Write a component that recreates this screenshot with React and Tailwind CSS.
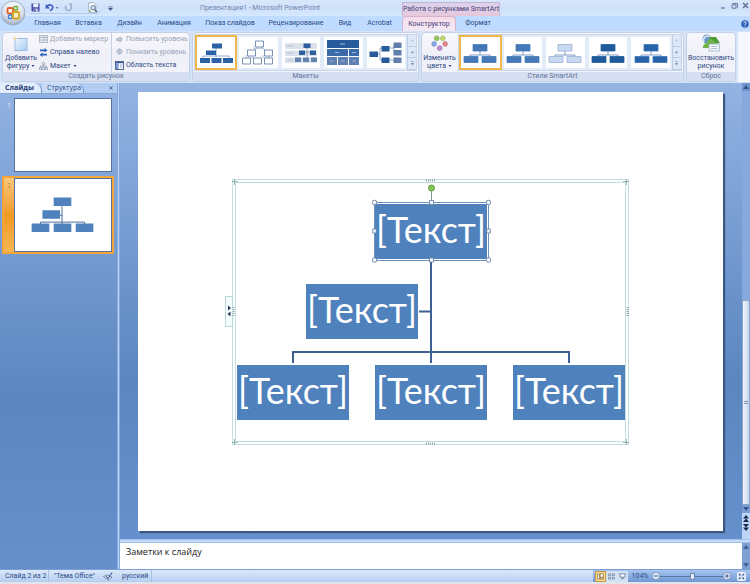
import React from "react";

const menuTabs = [
  { label: "Главная", width: "w-[41px]" },
  { label: "Вставка", width: "w-[41px]" },
  { label: "Дизайн", width: "w-[41px]" },
  { label: "Анимация", width: "w-[48px]" },
  { label: "Показ слайдов", width: "w-[64px]" },
  { label: "Рецензирование", width: "w-[68px]" },
  { label: "Вид", width: "w-[30px]" },
  { label: "Acrobat", width: "w-[39px]" },
];

const styleVariants = [
  { id: "flat", fill: "#4478b8", stroke: "#4478b8", selected: true },
  { id: "outline", fill: "#4478b8", stroke: "#4478b8" },
  { id: "subtle", fill: "#c9d9f1", stroke: "#9db1d6" },
  { id: "moderate", fill: "#215a9c", stroke: "#215a9c" },
  { id: "intense", fill: "#2763a8", stroke: "#3b76b8" },
];

const childNodes = ["left-[5px]", "left-[143px]", "left-[281px]"];

function OfficeOrb() {
  return (
    <svg viewBox="0 0 26 26" className="h-[26px] w-[26px]" aria-hidden="true">
      <defs>
        <radialGradient id="orb" cx="50%" cy="30%" r="70%">
          <stop offset="0" stopColor="#ffffff" />
          <stop offset="0.6" stopColor="#dce2ec" />
          <stop offset="1" stopColor="#9dabc3" />
        </radialGradient>
      </defs>
      <circle cx="13" cy="13" r="12" fill="url(#orb)" stroke="#9aa8c2" strokeWidth="0.8" />
      <rect x="7.5" y="8" width="5.5" height="5.5" rx="1" fill="#fff4e8" stroke="#e2602b" strokeWidth="1.8" />
      <rect x="14" y="6.5" width="3.5" height="3.5" rx="0.8" fill="#eef8e0" stroke="#6faa35" strokeWidth="1.3" />
      <rect x="8.5" y="15" width="3.5" height="3.5" rx="0.8" fill="#e4effc" stroke="#3f7fcf" strokeWidth="1.4" />
      <rect x="13" y="12" width="6" height="6.5" rx="1" fill="#fdf2c4" stroke="#d8a21c" strokeWidth="1.8" />
    </svg>
  );
}

function SaveIcon() {
  return (
    <svg viewBox="0 0 10 10" className="h-[9px] w-[9px]" aria-hidden="true">
      <path d="M0.5 0.5h9v9h-8l-1-1z" fill="#4a4fae" />
      <rect x="2.5" y="0.5" width="5.5" height="4.2" fill="#eef2ff" />
      <rect x="3" y="6.3" width="4.6" height="3.2" fill="#c9d1f0" />
      <rect x="3.6" y="7" width="1.4" height="2.5" fill="#30357f" />
    </svg>
  );
}

function UndoIcon() {
  return (
    <svg viewBox="0 0 10 10" className="h-[9px] w-[9px]" aria-hidden="true">
      <path d="M2 4.2C4 1 9 1.6 8.6 5.2c-.2 1.6-1.4 2.8-3 3.4" fill="none" stroke="#3d5fc0" strokeWidth="1.8" />
      <path d="M0.6 1.2v5h5z" fill="#3d5fc0" />
    </svg>
  );
}

function RedoIcon() {
  return (
    <svg viewBox="0 0 10 10" className="h-[9px] w-[9px]" aria-hidden="true">
      <path d="M2.6 3a3.2 3.2 0 1 0 4.8 0" fill="none" stroke="#96a9c9" strokeWidth="1.5" />
      <path d="M5.2 0.6h3.6v3.6z" fill="#96a9c9" />
    </svg>
  );
}

function PreviewIcon() {
  return (
    <svg viewBox="0 0 12 12" className="h-[11px] w-[11px]" aria-hidden="true">
      <path d="M2 0.8h5l2.6 2.6v7.8H2z" fill="#fff" stroke="#8a98b4" strokeWidth="0.8" />
      <circle cx="6.6" cy="6.3" r="2.4" fill="#cfe4f8" stroke="#4b5c7b" strokeWidth="0.9" />
      <path d="M8.4 8.2l2.6 2.8" stroke="#4b5c7b" strokeWidth="1.5" />
      <path d="M2.5 8.5l1.6 2" stroke="#7cac3e" strokeWidth="1.2" />
    </svg>
  );
}

function Caret({ className = "" }) {
  return (
    <svg viewBox="0 0 6 4" className={`h-[2px] w-[4px] ${className}`} aria-hidden="true">
      <path d="M0 0h6L3 4z" fill="currentColor" />
    </svg>
  );
}

function WindowButtons() {
  return (
    <div className="flex items-center gap-1 pr-px text-[#5b6f93]">
      <button type="button" aria-label="Свернуть">
        <svg viewBox="0 0 7 7" className="h-[7px] w-[7px]"><path d="M1 6h4" stroke="currentColor" strokeWidth="1.2" /></svg>
      </button>
      <button type="button" aria-label="Восстановить">
        <svg viewBox="0 0 7 7" className="h-[7px] w-[7px]">
          <path d="M1.5 1.5h5v4M1 2.8h4v3.4H1z" fill="none" stroke="currentColor" strokeWidth="0.9" />
        </svg>
      </button>
      <button type="button" aria-label="Закрыть">
        <svg viewBox="0 0 7 7" className="h-[7px] w-[7px]"><path d="M1 1l5 5M6 1L1 6" stroke="currentColor" strokeWidth="1.4" /></svg>
      </button>
    </div>
  );
}

function TitleBar() {
  return (
    <div className="flex h-4 items-stretch bg-linear-to-b from-[#d8e7fb] via-[#cfe1fa] to-[#d6e8fd] pl-[30px]">
      <div className="mt-0.5 flex h-3 w-[72px] items-center gap-[5px] rounded-r-full border-b border-[#b4cbec] pl-px text-[#6c82aa]">
        <button type="button" aria-label="Сохранить"><SaveIcon /></button>
        <button type="button" aria-label="Отменить"><UndoIcon /></button>
        <Caret className="-ml-1" />
        <button type="button" aria-label="Повторить"><RedoIcon /></button>
        <span className="w-1" />
        <button type="button" aria-label="Просмотр"><PreviewIcon /></button>
      </div>
      <button type="button" aria-label="Настройка панели" className="flex w-4 items-center justify-center text-[#3d5a8c]">
        <svg viewBox="0 0 6 6" className="h-[5px] w-[5px]">
          <path d="M0.5 0.8h5M0.5 2.5h5L3 5.5z" stroke="currentColor" strokeWidth="0.6" fill="currentColor" />
        </svg>
      </button>
      <div className="flex flex-1 items-center justify-center text-[7px] text-[#7387ac]">
        Презентация1 - Microsoft PowerPoint
      </div>
      <div className="mt-0.5 flex w-[98px] items-center justify-center border-x border-t border-[#c6b4d8] bg-linear-to-b from-[#dcd3ec] to-[#e6c8dc] text-[7px] whitespace-nowrap text-[#473f7a]">
        Работа с рисунками SmartArt
      </div>
      <div className="flex w-[250px] items-start justify-end pt-0.5">
        <WindowButtons />
      </div>
    </div>
  );
}

function MenuBar() {
  return (
    <nav className="flex h-[15px] items-stretch bg-[#bfdbff] pl-[27px] text-[7px] text-[#2b4a86]">
      {menuTabs.map((tab) => (
        <button key={tab.label} type="button" className={`${tab.width} whitespace-nowrap`}>
          {tab.label}
        </button>
      ))}
      <span className="flex-1" />
      <button
        type="button"
        className="w-[54px] rounded-t-sm border-x border-t border-[#d5b3cb] bg-linear-to-b from-[#f6dbe8] to-[#f2eaf5] text-[#45407a]"
      >
        Конструктор
      </button>
      <button type="button" className="w-[44px]">Формат</button>
      <div className="flex w-[250px] items-center justify-end pr-px">
        <button type="button" aria-label="Справка">
          <svg viewBox="0 0 8 8" className="h-2 w-2">
            <circle cx="4" cy="4" r="3.8" fill="#2f5fb5" />
            <path d="M2.8 3.1c0-1.7 2.6-1.6 2.5-.1C5.2 4 4 3.8 4 5M4 5.7v.9" fill="none" stroke="#fff" strokeWidth="0.9" />
          </svg>
        </button>
      </div>
    </nav>
  );
}

function RibbonGroup({ title, className = "", children }) {
  return (
    <section
      className={`flex flex-col overflow-hidden rounded-sm border border-[#c3d0e6] bg-linear-to-b from-[#f8f7fc] via-[#efeff8] to-[#f4f4fb] ${className}`}
    >
      <div className="flex flex-1">{children}</div>
      <h2 className="h-[9px] bg-[#d5dff1] text-center text-[7px] leading-[9px] text-[#5e7296]">{title}</h2>
    </section>
  );
}

function ShapeIcon() {
  return (
    <svg viewBox="0 0 16 16" className="h-4 w-4" aria-hidden="true">
      <defs>
        <linearGradient id="shape" x1="0" y1="0" x2="1" y2="1">
          <stop offset="0" stopColor="#eef6ff" />
          <stop offset="1" stopColor="#a8cdf4" />
        </linearGradient>
      </defs>
      <rect x="2" y="2.5" width="12" height="12" fill="url(#shape)" stroke="#9dbce2" />
      <path d="M2 0.5v4M0 2.5h4" stroke="#f8d799" strokeWidth="1" />
    </svg>
  );
}

function BulletIcon() {
  return (
    <svg viewBox="0 0 9 8" className="h-2 w-[9px]" aria-hidden="true">
      <rect x="0.5" y="0.5" width="8" height="7" fill="#e5e8ee" stroke="#b6bdca" />
      <path d="M1.5 2.5h1.2M1.5 5h1.2M3.5 2.5h4M3.5 5h4" stroke="#9aa5b8" />
    </svg>
  );
}

function RightToLeftIcon() {
  return (
    <svg viewBox="0 0 9 9" className="h-[9px] w-[9px]" aria-hidden="true">
      <path d="M1 2.3h5M3 6.7h5" stroke="#2c62bd" strokeWidth="1.8" />
      <path d="M5.5 0L8.5 2.3l-3 2.2zM3.5 4.5L0.5 6.7l3 2.3z" fill="#2c62bd" />
    </svg>
  );
}

function HierarchyIcon() {
  return (
    <svg viewBox="0 0 9 8" className="h-2 w-[9px]" aria-hidden="true">
      <path d="M4.5 2v2M1.5 6V4h6v2" fill="none" stroke="#8b98b0" strokeWidth="0.8" />
      <circle cx="4.5" cy="1.5" r="1.2" fill="#fff" stroke="#7887a3" strokeWidth="0.7" />
      <path d="M0.4 5.5h2.2v2H.4zM3.4 5.5h2.2v2H3.4zM6.4 5.5h2.2v2H6.4z" fill="#fff" stroke="#7887a3" strokeWidth="0.7" />
    </svg>
  );
}

function LevelIcon({ up }) {
  return (
    <svg viewBox="0 0 8 8" className="h-[7px] w-[7px]" aria-hidden="true">
      {up ? (
        <path d="M7.5 4L4.5 0.8v2H0.8v2.4h3.7v2z" fill="#c3ccda" stroke="#98a5ba" strokeWidth="0.8" />
      ) : (
        <path d="M7.5 4L4.5 0.8v2H3.5v-2L0.5 4l3 3.2v-2h1v2z" fill="#c3ccda" stroke="#98a5ba" strokeWidth="0.8" />
      )}
    </svg>
  );
}

function TextPaneIcon() {
  return (
    <svg viewBox="0 0 9 9" className="h-[9px] w-[9px]" aria-hidden="true">
      <rect x="0.5" y="0.5" width="8" height="8" fill="#fff" stroke="#506a99" />
      <path d="M0.5 1.5h8" stroke="#3c5fa5" strokeWidth="1.5" />
      <rect x="1" y="2.3" width="2.7" height="5.7" fill="#7c9ad0" />
      <path d="M5 4h2.5M5 6h2.5" stroke="#7b8cac" strokeWidth="0.8" />
    </svg>
  );
}

function GalleryScroll() {
  const arrows = [
    ["Вверх", "M1 4L3 1.5 5 4z"],
    ["Вниз", "M1 2h4L3 4.5z"],
    ["Дополнительно", "M1 0.5h4v.8H1zM1 2.5h4L3 5z"],
  ];
  return (
    <div className="flex w-[9px] flex-col border-l border-[#bccce5]">
      {arrows.map(([label, d], i) => (
        <button
          key={label}
          type="button"
          aria-label={label}
          className={`flex flex-1 items-center justify-center border-b border-[#bccce5] bg-[#dce7f7] ${
            i === 0 ? "text-[#b2bfd5]" : "text-[#7189b5]"
          }`}
        >
          <svg viewBox="0 0 6 6" className="h-[5px] w-[5px]"><path d={d} fill="currentColor" /></svg>
        </button>
      ))}
    </div>
  );
}

function GalleryItem({ label, selected, children }) {
  return (
    <button
      type="button"
      aria-label={label}
      className={`flex min-w-0 flex-1 items-center justify-center ${
        selected ? "border-2 border-[#efb84c] bg-white" : "m-0.5 bg-white"
      }`}
    >
      {children}
    </button>
  );
}

function OrgLayout() {
  return (
    <svg viewBox="0 0 36 28" className="h-7 w-9">
      <path d="M18 9v9M14 14.5h4M5 19v-2h26v2" fill="none" stroke="#7f9cc8" strokeWidth="0.8" />
      <path d="M14 4.5h10v5H14zM8 11.5h10v4.5H8zM2 19h10v5H2zM13.5 19h10v5h-10zM25 19h10v5H25z" fill="#2a62a8" />
    </svg>
  );
}

function PictureLayout() {
  return (
    <svg viewBox="0 0 36 28" className="h-7 w-9">
      <path d="M17 8L9 14M20 8l8 6M8 17l-4 5M27 17l4 5" stroke="#8fa4c3" strokeWidth="0.8" />
      <path
        d="M14.5 2h8v6h-8zM6.5 11h8v6h-8zM23.5 11h8v6h-8zM1.5 19h8v6h-8zM12.5 19h8v6h-8zM23.5 19h8v6h-8z"
        fill="#fdfefe"
        stroke="#6d86ad"
        strokeWidth="0.9"
      />
      <path d="M13 7v2.5h8M5 16v2.5h8M22 16v2.5h8" fill="none" stroke="#afbdd4" strokeWidth="0.8" />
    </svg>
  );
}

function LabeledLayout() {
  return (
    <svg viewBox="0 0 36 28" className="h-7 w-9">
      <path d="M2 4h32v6H2zM2 11.5h32V17H2zM2 18.5h32V24H2z" fill="#dce2ec" />
      <path d="M4 7h6M4 14h6M4 21h6" stroke="#a9b5c9" strokeWidth="0.8" />
      <path d="M24 8v10M17 13h13" stroke="#7d94b9" strokeWidth="0.8" />
      <path d="M20.5 4.5h7V9h-7zM16 11.5h6V16h-6zM27 11.5h6V16h-6z" fill="#2d5f9f" />
      <path d="M12 18.5h6V23h-6zM20 18.5h6V23h-6zM28 18.5h6V23h-6z" fill="#6382ad" />
    </svg>
  );
}

function TableLayout() {
  return (
    <svg viewBox="0 0 36 28" className="h-7 w-9">
      <path d="M2 1h32v8H2z" fill="#275b9b" />
      <path d="M2 10h21v7H2zM24 10h10v7H24z" fill="#3a6cab" />
      <path d="M2 18h10v8H2zM13 18h10v8H13zM24 18h10v8H24z" fill="#5e80b2" />
      <path d="M15 5h5M10 13.5h4M27 13.5h4M5 22h3M16.5 22h3M27.5 22h3" stroke="#b9cae4" strokeWidth="0.8" />
    </svg>
  );
}

function HorizontalLayout() {
  return (
    <svg viewBox="0 0 36 28" className="h-7 w-9">
      <path d="M8 15h4V9h3M12 15v6h3M21 9h5V6M26 9v4M21 21h5" fill="none" stroke="#7d94b9" strokeWidth="0.8" />
      <path d="M1.5 12.5h8.5v5.5H1.5zM13.5 7h8v5.5h-8zM13.5 18.5h8v5.5h-8z" fill="#265a9b" />
      <path d="M25.5 3.5h8v5.5h-8zM25.5 11h8v5.5h-8zM25.5 18.5h8v5.5h-8z" fill="#607fad" />
    </svg>
  );
}

function StyleThumb({ fill, stroke }) {
  return (
    <svg viewBox="0 0 36 28" className="h-7 w-9">
      <path d="M18 12v4M8 18v-2h20v2" fill="none" stroke="#7f9cc8" />
      <path d="M11 5.5h14V12H11zM2 17.5h14V23.5H2zM20 17.5h14V23.5H20z" fill={fill} stroke={stroke} strokeWidth="0.8" />
    </svg>
  );
}

function ColorsIcon() {
  return (
    <svg viewBox="0 0 18 18" className="h-[17px] w-[17px]" aria-hidden="true">
      <circle cx="6" cy="3.5" r="2.5" fill="#98c95e" stroke="#6a9c3b" strokeWidth="0.6" />
      <circle cx="12.5" cy="3.5" r="2.5" fill="#c5d96d" stroke="#8dab3d" strokeWidth="0.6" />
      <circle cx="3.3" cy="9.5" r="2.5" fill="#8eaadf" stroke="#5877bd" strokeWidth="0.6" />
      <circle cx="15" cy="9.5" r="2.5" fill="#e58c93" stroke="#ba5d68" strokeWidth="0.6" />
      <circle cx="9.2" cy="14" r="2.5" fill="#c18dd1" stroke="#9560a8" strokeWidth="0.6" />
    </svg>
  );
}

function ResetIcon() {
  return (
    <svg viewBox="0 0 20 18" className="h-[18px] w-5" aria-hidden="true">
      <circle cx="6" cy="5" r="4.5" fill="#6b94c6" />
      <path d="M3 8a4 4 0 0 1 6-5" fill="none" stroke="#dce9f7" strokeWidth="1.5" />
      <path d="M2 12L10 3.5l8.5 7.5v3H2z" fill="#6fb34a" />
      <path d="M7 3h8l4 6h-4z" fill="#539b3c" />
      <rect x="8" y="10" width="10.5" height="7" fill="#f5f8fd" stroke="#9eb0ca" strokeWidth="0.8" />
      <path d="M10 12.5h6.5M10 14.5h6.5" stroke="#9eb0ca" strokeWidth="0.8" />
    </svg>
  );
}

function Ribbon() {
  return (
    <div className="flex h-[52px] gap-0.5 bg-[#d5e3f6] py-px pl-0.5 text-[7px] leading-[8px] text-[#2c4a83]">
      <RibbonGroup title="Создать рисунок" className="w-[188px]">
        <button type="button" className="flex w-9 flex-col items-center pt-[3px]">
          <ShapeIcon />
          <span className="mt-0.5">Добавить</span>
          <span className="flex items-center gap-0.5">фигуру <Caret /></span>
        </button>
        <div className="flex w-[73px] flex-col justify-around border-r border-[#c5d2e6]">
          <button type="button" disabled className="flex items-center gap-0.5 whitespace-nowrap text-[#98a3b6]">
            <BulletIcon />Добавить маркер
          </button>
          <button type="button" className="flex items-center gap-0.5 whitespace-nowrap"><RightToLeftIcon />Справа налево</button>
          <button type="button" className="flex items-center gap-0.5"><HierarchyIcon />Макет <Caret /></button>
        </div>
        <div className="flex flex-1 flex-col justify-around pl-[3px]">
          <button type="button" disabled className="flex items-center gap-[3px] pl-px whitespace-nowrap text-[#98a3b6]">
            <LevelIcon up />Повысить уровень
          </button>
          <button type="button" disabled className="flex items-center gap-[3px] pl-px whitespace-nowrap text-[#98a3b6]">
            <LevelIcon />Понизить уровень
          </button>
          <button type="button" className="flex items-center gap-0.5 whitespace-nowrap"><TextPaneIcon />Область текста</button>
        </div>
      </RibbonGroup>

      <RibbonGroup title="Макеты" className="w-[227px]">
        <div className="m-px flex flex-1 border border-[#c9d6ea] bg-[#e2ebf8]">
          <GalleryItem label="Организационная диаграмма" selected><OrgLayout /></GalleryItem>
          <GalleryItem label="Иерархия"><PictureLayout /></GalleryItem>
          <GalleryItem label="Иерархия с подписями"><LabeledLayout /></GalleryItem>
          <GalleryItem label="Табличная иерархия"><TableLayout /></GalleryItem>
          <GalleryItem label="Горизонтальная иерархия"><HorizontalLayout /></GalleryItem>
          <GalleryScroll />
        </div>
      </RibbonGroup>

      <RibbonGroup title="Стили SmartArt" className="w-[263px]">
        <button type="button" className="flex w-[35px] flex-col items-center pt-0.5">
          <ColorsIcon />
          <span className="mt-0.5">Изменить</span>
          <span className="flex items-center gap-0.5">цвета <Caret /></span>
        </button>
        <div className="m-px flex flex-1 border border-[#c9d6ea] bg-[#e2ebf8]">
          {styleVariants.map((v) => (
            <GalleryItem key={v.id} label={v.id} selected={v.selected}>
              <StyleThumb fill={v.fill} stroke={v.stroke} />
            </GalleryItem>
          ))}
          <GalleryScroll />
        </div>
      </RibbonGroup>

      <RibbonGroup title="Сброс" className="w-[50px]">
        <button type="button" className="flex flex-1 flex-col items-center pt-px">
          <ResetIcon />
          <span className="mt-0.5">Восстановить</span>
          <span>рисунок</span>
        </button>
      </RibbonGroup>
      <div className="flex-1 bg-[#f6f8fd]" />
    </div>
  );
}

function SlideThumb({ number, selected, children }) {
  return (
    <button
      type="button"
      aria-label={`Слайд ${number}`}
      className={`flex items-stretch border-2 ${
        selected
          ? "border-[#f3a53a] bg-linear-to-b from-[#fbc878] via-[#f39a20] to-[#f8b550]"
          : "border-transparent"
      }`}
    >
      <span className={`w-[10px] pt-1 text-[7px] leading-[8px] ${selected ? "text-[#b38b48]" : "text-[#e4edfa]"}`}>
        {number}
      </span>
      <span className="flex h-[74px] flex-1 items-center justify-center border border-[#54719f] bg-white">{children}</span>
    </button>
  );
}

function SlidesPane() {
  return (
    <aside className="flex w-[117px] flex-col bg-linear-to-b from-[#93b3e3] via-[#5b86c0] via-65% to-[#6590cb]">
      <div className="flex h-[11px] items-stretch border-b border-[#86a5d4] bg-[#b3cdf2] text-[7px] leading-[10px] text-[#2b4a86]">
        <button type="button" className="w-[42px] rounded-tr-lg border-r border-[#7293c6] bg-[#e3eefc] pl-[5px] text-left font-bold text-[#1d3a74]">
          Слайды
        </button>
        <button type="button" className="w-[42px] rounded-tr-lg border-r border-[#7293c6] bg-[#c6dbf7] pl-[5px] text-left">
          Структура
        </button>
        <span className="flex-1" />
        <button type="button" aria-label="Закрыть область" className="pr-1">
          <svg viewBox="0 0 5 5" className="h-1 w-1"><path d="M0.5 0.5l4 4M4.5 0.5l-4 4" stroke="#35558d" /></svg>
        </button>
      </div>
      <div className="flex flex-col gap-0.5 pt-0.5 pr-[3px] pl-0.5">
        <SlideThumb number="1" />
        <SlideThumb number="2" selected>
          <svg viewBox="0 0 98 74" className="w-full">
            <path d="M48 28v18M46 37h2M26 46v-2h45v2" fill="none" stroke="#4a6899" strokeWidth="1" />
            <path d="M39.5 19h18v8.5h-18zM28 32h18v8.5H28zM17 45.5h18V54H17zM39.5 45.5h18V54h-18zM62 45.5h18V54H62z" fill="#4f81bd" />
          </svg>
        </SlideThumb>
      </div>
    </aside>
  );
}

function DiagramNode({ className }) {
  return (
    <div
      className={`absolute flex h-[55px] w-[112px] items-center justify-center bg-[#4f81bd] pb-1 font-[Lato,'Noto_Sans',sans-serif] text-[36px] leading-[48px] whitespace-nowrap text-white ${className}`}
    >
      [Текст]
    </div>
  );
}

// Frame, connectors and selection handles drawn over the slide canvas
function SmartArt() {
  return (
    <div className="relative h-[266px] w-[397px] shrink-0">
      <svg viewBox="0 0 397 266" className="absolute inset-0 h-full w-full" aria-hidden="true">
        <rect x="0.5" y="0.5" width="396" height="265" fill="none" stroke="#c2dfdd" />
        <rect x="3.5" y="3.5" width="390" height="259" fill="none" stroke="#c2dfdd" />
        <path d="M199 82v102M187 132.5h12M61 184v-11h276v11" fill="none" stroke="#3d6091" strokeWidth="2" />
        <path d="M2.5 0v6M0 2.5h6M394.5 0v6M391 2.5h6M2.5 260v6M0 263.5h6M394.5 260v6M391 263.5h6" stroke="#7fa19f" strokeWidth="0.8" />
        <path d="M194 1.5h9M194 264.5h9M1.5 128v10M395.5 128v10" stroke="#8ba3a1" strokeWidth="2" strokeDasharray="1 1" />
      </svg>
      <div className="absolute top-[117px] -left-[7px] flex h-[31px] w-2 items-center justify-center border border-[#b7d9d6] bg-[#f6fcfc]">
        <svg viewBox="0 0 6 12" className="h-3 w-1.5" aria-hidden="true">
          <path d="M2 0.5L5 3 2 5.5zM4.5 6.5L1.5 9l3 2.5z" fill="#24385a" />
        </svg>
      </div>
      <DiagramNode className="top-[25px] left-[143px]" />
      <DiagramNode className="top-[105px] left-[74px]" />
      {childNodes.map((pos) => (
        <DiagramNode key={pos} className={`top-[186px] ${pos}`} />
      ))}
      <svg viewBox="0 0 119 80" className="absolute top-[4px] left-[140px] h-20 w-[119px]" aria-hidden="true">
        <path d="M59.5 8v11" stroke="#7c9a9c" />
        <rect x="2.5" y="19.5" width="114" height="58" fill="none" stroke="#6f91bd" />
        <circle cx="59.5" cy="5" r="3" fill="#83c653" stroke="#568e35" strokeWidth="0.8" />
        <g fill="#f7fbff" stroke="#6681a7" strokeWidth="0.9">
          <circle cx="2.5" cy="19.5" r="2.3" />
          <circle cx="116.5" cy="19.5" r="2.3" />
          <circle cx="2.5" cy="77" r="2.3" />
          <circle cx="116.5" cy="77" r="2.3" />
          <path d="M57.5 17.5h4v4h-4zM57.5 75h4v4h-4zM0.8 46h3.5v4H.8zM114.8 46h3.5v4h-3.5z" />
        </g>
      </svg>
    </div>
  );
}

function VerticalScroll() {
  return (
    <div className="flex w-2 flex-col items-center bg-[#86a8dc] text-[#33558f]">
      <button type="button" aria-label="Прокрутить вверх" className="flex h-2 w-full items-center justify-center bg-[#6f93cc]">
        <svg viewBox="0 0 6 4" className="h-1 w-1.5"><path d="M0 4h6L3 0z" fill="currentColor" /></svg>
      </button>
      <div className="w-full flex-1" />
      <div className="flex h-[45%] w-full flex-col items-center justify-center gap-px border border-[#8aa3c9] bg-linear-to-r from-[#f1f6fd] to-[#c6d4ea]">
        <span className="h-px w-1 bg-[#7f93b5]" />
        <span className="h-px w-1 bg-[#7f93b5]" />
      </div>
      <button type="button" aria-label="Прокрутить вниз" className="flex h-2 w-full items-center justify-center bg-[#7b9dd3]">
        <svg viewBox="0 0 6 4" className="h-1 w-1.5"><path d="M0 0h6L3 4z" fill="currentColor" /></svg>
      </button>
      <div className="flex w-full flex-col items-center gap-0.5 bg-[#bdd5f7] pt-0.5 pb-2 text-[#1c2b49]">
        <button type="button" aria-label="Предыдущий слайд">
          <svg viewBox="0 0 6 7" className="block h-[7px] w-1.5"><path d="M0 3.5L3 0l3 3.5zM0 7l3-3.5L6 7z" fill="currentColor" /></svg>
        </button>
        <button type="button" aria-label="Следующий слайд">
          <svg viewBox="0 0 6 7" className="block h-[7px] w-1.5"><path d="M0 0h6L3 3.5zM0 3.5h6L3 7z" fill="currentColor" /></svg>
        </button>
      </div>
    </div>
  );
}

function Workspace() {
  return (
    <main className="flex min-w-0 flex-1 flex-col">
      <div className="flex min-h-0 flex-1">
        <div className="flex min-w-0 flex-1 bg-linear-to-b from-[#93b3e3] via-[#5b86c0] via-65% to-[#6590cb] pt-[9px] pr-[19px] pb-[8px] pl-[18px]">
          <div className="flex flex-1 items-center justify-center bg-white shadow-[2px_2px_1px_#3b5681]">
            <SmartArt />
          </div>
        </div>
        <VerticalScroll />
      </div>
      <div className="h-1 border-y border-[#a3c0ea] bg-[#c4dbf9]" />
      <div className="flex h-[26px] bg-white">
        <textarea
          aria-label="Заметки к слайду"
          defaultValue="Заметки к слайду"
          className="min-w-0 flex-1 resize-none overflow-hidden px-1.5 pt-[3px] text-[9px] leading-[12px] text-[#222222] outline-none"
        />
        <div className="flex w-2 flex-col items-center justify-between bg-[#7e9fd2] py-0.5 text-[#44639b]">
          <svg viewBox="0 0 6 4" className="h-1 w-1.5"><path d="M0 4h6L3 0z" fill="currentColor" /></svg>
          <svg viewBox="0 0 6 4" className="h-1 w-1.5"><path d="M0 0h6L3 4z" fill="currentColor" /></svg>
        </div>
      </div>
    </main>
  );
}

function StatusBar() {
  return (
    <footer className="flex h-[15px] items-stretch border-t border-b-2 border-t-[#7c9ed2] border-b-[#e1e4ea] bg-linear-to-b from-[#dce9fb] to-[#b4cdf0] text-[7px] text-[#2b4a86]">
      <span className="flex w-[49px] items-center border-r border-[#a5bfe5] pl-[5px]">Слайд 2 из 2</span>
      <span className="flex w-[50px] items-center pl-[5px]">"Тема Office"</span>
      <span className="flex w-[18px] items-center justify-center">
        <svg viewBox="0 0 10 9" className="h-[9px] w-[10px]" aria-hidden="true">
          <path d="M0.5 4.5L4 3l5 2-3.5 3z" fill="#f1f5fb" stroke="#5d7398" strokeWidth="0.8" />
          <path d="M3 4l2 2.5L9 0.5" fill="none" stroke="#486b9f" strokeWidth="1.2" />
        </svg>
      </span>
      <span className="flex w-[35px] items-center border-r border-[#a5bfe5] pl-[5px]">русский</span>
      <span className="flex-1" />
      <div className="flex w-[157px] items-center bg-linear-to-b from-[#a9c5ef] to-[#6f97d3] pl-0.5">
        <button type="button" aria-label="Обычный" className="flex h-[11px] w-[11px] items-center justify-center border border-[#c69642] bg-[#fbdc93]">
          <svg viewBox="0 0 8 8" className="h-[7px] w-[7px]"><path d="M0.5 1h2.2v6H.5zM3.5 1h4v3.8h-4zM3.5 5.8h4V7h-4z" fill="#fff" stroke="#85652c" strokeWidth="0.8" /></svg>
        </button>
        <button type="button" aria-label="Сортировщик" className="flex h-[11px] w-[11px] items-center justify-center bg-[#d3e1f5]">
          <svg viewBox="0 0 8 8" className="h-[7px] w-[7px]"><path d="M0.5 1H3v2H.5zM4.8 1h2.5v2H4.8zM0.5 5H3v2H.5zM4.8 5h2.5v2H4.8z" fill="#fff" stroke="#5d7297" strokeWidth="0.8" /></svg>
        </button>
        <button type="button" aria-label="Показ слайдов" className="flex h-[11px] w-[11px] items-center justify-center bg-[#d3e1f5]">
          <svg viewBox="0 0 8 8" className="h-[7px] w-[7px]"><path d="M0.5 1h7M1.2 1v3.7h5.6V1M4 4.7V7M2.3 7.2L4 5.5l1.7 1.7" fill="#fff" stroke="#5d7297" strokeWidth="0.9" /></svg>
        </button>
        <span className="w-6 text-center">104%</span>
        <button type="button" aria-label="Уменьшить">
          <svg viewBox="0 0 8 8" className="block h-2 w-2"><circle cx="4" cy="4" r="3.5" fill="#edf3fc" stroke="#6982ae" strokeWidth="0.7" /><path d="M2 4h4" stroke="#34538b" /></svg>
        </button>
        <div className="flex h-2 flex-1 items-center">
          <input
            type="range"
            aria-label="Масштаб"
            min="0"
            max="100"
            defaultValue="51"
            className="h-2 w-full appearance-none bg-[linear-gradient(#58779f,#58779f)] bg-[length:100%_1px] bg-center bg-no-repeat [&::-webkit-slider-thumb]:h-[7px] [&::-webkit-slider-thumb]:w-[5px] [&::-webkit-slider-thumb]:appearance-none [&::-webkit-slider-thumb]:rounded-b-sm [&::-webkit-slider-thumb]:border [&::-webkit-slider-thumb]:border-[#6982ae] [&::-webkit-slider-thumb]:bg-[#e4edfa]"
          />
        </div>
        <button type="button" aria-label="Увеличить">
          <svg viewBox="0 0 8 8" className="block h-2 w-2"><circle cx="4" cy="4" r="3.5" fill="#edf3fc" stroke="#6982ae" strokeWidth="0.7" /><path d="M2 4h4M4 2v4" stroke="#34538b" /></svg>
        </button>
        <button type="button" aria-label="По размеру окна" className="mr-1 ml-1.5">
          <svg viewBox="0 0 9 9" className="block h-[9px] w-[9px]">
            <rect x="0.5" y="0.5" width="8" height="8" rx="1" fill="#dce8f9" stroke="#edf4fe" />
            <path d="M2 2l1.5 1.5M7 2L5.5 3.5M2 7l1.5-1.5M7 7L5.5 5.5" stroke="#34538b" strokeWidth="1.1" />
          </svg>
        </button>
      </div>
    </footer>
  );
}

export default function App() {
  return (
    <div className="flex h-screen flex-col bg-[#a4c2ee] font-[Roboto,'Noto_Sans',sans-serif]">
      <header className="relative">
        <TitleBar />
        <MenuBar />
        <button type="button" aria-label="Кнопка Office" className="absolute top-0 left-0">
          <OfficeOrb />
        </button>
      </header>
      <Ribbon />
      <div className="flex min-h-0 flex-1 font-['Open_Sans','Noto_Sans',sans-serif]">
        <SlidesPane />
        <div className="w-[3px] border-x border-[#86a8dc] bg-[#bdd5f8]" />
        <Workspace />
      </div>
      <StatusBar />
    </div>
  );
}
